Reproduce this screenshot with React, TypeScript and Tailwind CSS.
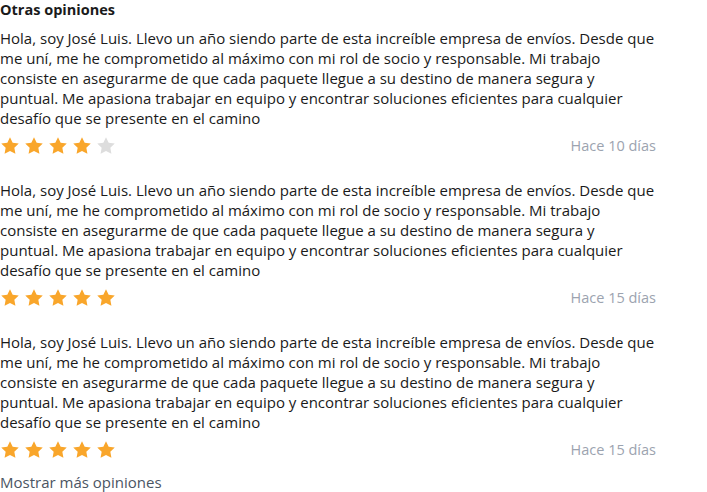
import React from "react";

const lines = [
  "Hola, soy José Luis. Llevo un año siendo parte de esta increíble empresa de envíos. Desde que",
  "me uní, me he comprometido al máximo con mi rol de socio y responsable. Mi trabajo",
  "consiste en asegurarme de que cada paquete llegue a su destino de manera segura y",
  "puntual. Me apasiona trabajar en equipo y encontrar soluciones eficientes para cualquier",
  "desafío que se presente en el camino",
];

const reviews = [
  { rating: 4, date: "Hace 10 días" },
  { rating: 5, date: "Hace 15 días" },
  { rating: 5, date: "Hace 15 días" },
];

function Star({ filled }: { filled: boolean }) {
  return (
    <svg width="20" height="20" viewBox="0 0 24 24" className={filled ? "text-[#f9a62b]" : "text-[#dddddd]"}>
      <path
        fill="currentColor"
        d="M12 1.5l3.2 6.6 7.3 1-5.3 5.1 1.3 7.2L12 18l-6.5 3.4 1.3-7.2L1.5 9.1l7.3-1z"
      />
    </svg>
  );
}

export default function App() {
  return (
    <div className="w-[656px] bg-white font-['Open_Sans',sans-serif] text-[#1a1a1a]">
      <h2 className="text-[14.5px] font-bold leading-[20px]">Otras opiniones</h2>
      <div className="mt-2 flex flex-col gap-6">
        {reviews.map((r, i) => (
          <div key={i} className="flex flex-col gap-2">
            <p className="text-[15px] leading-[20px]">
              {lines.map((l, j) => (
                <span key={j} className="block whitespace-nowrap">
                  {l}
                </span>
              ))}
            </p>
            <div className="flex h-5 items-center justify-between">
              <div className="flex gap-1">
                {[0, 1, 2, 3, 4].map((s) => (
                  <Star key={s} filled={s < r.rating} />
                ))}
              </div>
              <span className="text-[14.5px] text-[#9ca3af]">{r.date}</span>
            </div>
          </div>
        ))}
      </div>
      <button className="mt-3 text-[15px] leading-[20px] text-[#4b5563]">Mostrar más opiniones</button>
    </div>
  );
}
